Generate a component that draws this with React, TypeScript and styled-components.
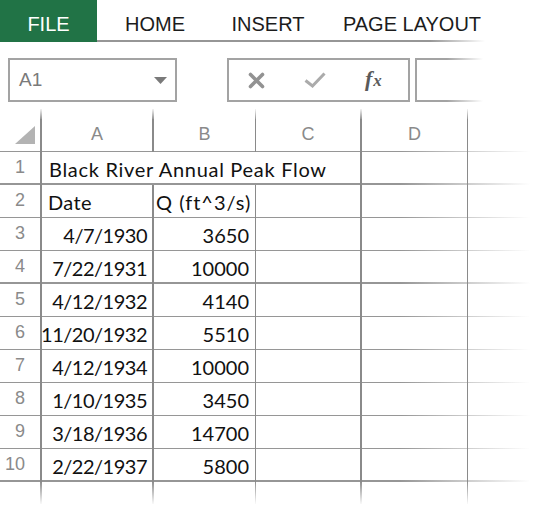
import React from 'react';
import styled, { createGlobalStyle } from 'styled-components';

const LINE = '#969696';
const LINE_DARK = '#8a8a8a';

const Global = createGlobalStyle`
  html, body { margin: 0; padding: 0; background: #fff; }
  body { font-family: "Liberation Sans", Arial, sans-serif; overflow: hidden; }
`;

const Page = styled.div`
  width: 534px;
  height: 505px;
  overflow: hidden;
  background: #fff;
`;

const TabBar = styled.div`
  display: flex;
  height: 42px;
  background: linear-gradient(to right, ${LINE} 0, ${LINE} 430px, rgba(150, 150, 150, 0) 485px) left bottom / 100% 2px no-repeat;
`;

const Tab = styled.div<{ $active?: boolean; $w: number }>`
  box-sizing: border-box;
  width: ${p => p.$w}px;
  height: 42px;
  padding-top: 12px;
  line-height: 24px;
  text-align: center;
  white-space: nowrap;
  font-size: 20px;
  color: ${p => (p.$active ? '#ffffff' : '#1c1c1c')};
  background: ${p => (p.$active ? '#217346' : 'transparent')};
`;

const FormulaBar = styled.div`
  display: flex;
  height: 44px;
  margin-top: 16px;
  padding-left: 8px;
`;

const NameBox = styled.div`
  box-sizing: border-box;
  width: 169px;
  border: 2px solid #a3a3a3;
  display: flex;
  align-items: center;
  justify-content: space-between;
  padding: 0 8px 0 9px;
  font-size: 19px;
  color: #7a7a7a;
`;

const ButtonBox = styled.div`
  box-sizing: border-box;
  width: 183px;
  margin-left: 50px;
  border: 2px solid #a3a3a3;
  display: flex;
  align-items: center;
  gap: 39px;
  padding-left: 19px;
`;

const Fx = styled.span`
  font-family: "Liberation Serif", "Times New Roman", serif;
  font-style: italic;
  font-weight: bold;
  color: #5a5a5a;
  font-size: 22px;
  line-height: 1;
  margin-top: -2px;
  & > span { font-size: 17px; margin-left: 1px; }
`;

const FormulaInput = styled.div`
  box-sizing: border-box;
  flex: 1;
  margin-left: 5px;
  border-left: 2px solid #a3a3a3;
  background:
    linear-gradient(to right, #a3a3a3 0, #a3a3a3 30px, rgba(163, 163, 163, 0) 66px) left top / 100% 2px no-repeat,
    linear-gradient(to right, #a3a3a3 0, #a3a3a3 30px, rgba(163, 163, 163, 0) 66px) left bottom / 100% 2px no-repeat;
`;

const Sheet = styled.div`
  margin-top: 7px;
`;

const COLS = '42px 112px 102px 106px 106px 1fr';

type Edge = 'thick' | 'thin' | 'none';
const edgeW = (e: Edge) => (e === 'thick' ? 2 : e === 'thin' ? 1 : 0);
const EDGES: Edge[] = ['thick', 'thick', 'thin', 'thick', 'thin', 'none'];

const StubRow = styled.div`
  display: grid;
  grid-template-columns: ${COLS};
  height: 10px;
`;

const Stub = styled.div<{ $edge: Edge; $up?: boolean }>`
  box-sizing: border-box;
  border-style: solid;
  border-width: 0 ${p => edgeW(p.$edge)}px 0 0;
  border-image: linear-gradient(${p => (p.$up ? 'to top' : 'to bottom')}, ${LINE_DARK}, rgba(138, 138, 138, 0)) 1;
`;

const TailRow = styled(StubRow)`
  height: 22px;
`;

const GridRow = styled.div<{ $line: number }>`
  display: grid;
  grid-template-columns: ${COLS};
  height: 33px;
  background: linear-gradient(to right, ${LINE} 0, ${LINE} 400px, rgba(150, 150, 150, 0) 530px) left bottom / 100% ${p => p.$line}px no-repeat;
`;

const Cell = styled.div<{ $edge: Edge; $align?: 'left' | 'right'; $span?: number; $pad?: string; $ls?: number }>`
  box-sizing: border-box;
  grid-column: span ${p => p.$span ?? 1};
  border-right: ${p => edgeW(p.$edge)}px solid ${LINE_DARK};
  display: flex;
  align-items: flex-end;
  justify-content: ${p => (p.$align === 'right' ? 'flex-end' : 'flex-start')};
  padding: ${p => p.$pad ?? '0 5px'};
  padding-bottom: 4px;
  white-space: nowrap;
  font-family: Lato, "Liberation Sans", sans-serif;
  font-size: 20px;
  line-height: 24px;
  letter-spacing: ${p => p.$ls ?? 0}px;
  color: #111;
`;

const RowHead = styled.div<{ $edge: Edge }>`
  box-sizing: border-box;
  border-right: ${p => edgeW(p.$edge)}px solid ${LINE_DARK};
  display: flex;
  align-items: center;
  justify-content: flex-end;
  padding: 0 15px 2px 0;
  font-size: 18px;
  color: #8a8a8a;
`;

const ColHead = styled.div<{ $edge: Edge }>`
  box-sizing: border-box;
  border-right: ${p => edgeW(p.$edge)}px solid ${LINE_DARK};
  display: flex;
  align-items: center;
  justify-content: center;
  padding-bottom: 2px;
  font-size: 18px;
  color: #8a8a8a;
`;

const Corner = styled.div`
  box-sizing: border-box;
  border-right: 2px solid ${LINE_DARK};
  display: flex;
  align-items: flex-end;
  justify-content: flex-end;
  padding: 0 5px 8px 0;
`;

type DataRow = { n: number; title?: string; a?: string; b?: string; line: number; head?: boolean };

const rows: DataRow[] = [
  { n: 1, title: 'Black River Annual Peak Flow', line: 2 },
  { n: 2, a: 'Date', b: 'Q (ft^3/s)', head: true, line: 1 },
  { n: 3, a: '4/7/1930', b: '3650', line: 1 },
  { n: 4, a: '7/22/1931', b: '10000', line: 2 },
  { n: 5, a: '4/12/1932', b: '4140', line: 1 },
  { n: 6, a: '11/20/1932', b: '5510', line: 1 },
  { n: 7, a: '4/12/1934', b: '10000', line: 1 },
  { n: 8, a: '1/10/1935', b: '3450', line: 1 },
  { n: 9, a: '3/18/1936', b: '14700', line: 1 },
  { n: 10, a: '2/22/1937', b: '5800', line: 2 },
];

const CancelIcon = () => (
  <svg width="17" height="17" viewBox="0 0 17 17">
    <path d="M2.5 2.5 L14.5 14.5 M14.5 2.5 L2.5 14.5" stroke="#929292" strokeWidth="3.6" strokeLinecap="round" fill="none" />
  </svg>
);

const EnterIcon = () => (
  <svg width="22" height="16" viewBox="0 0 22 16">
    <polyline points="1.5,8.5 8.5,14 20.5,1.5" stroke="#ababab" strokeWidth="3" strokeLinejoin="miter" fill="none" />
  </svg>
);

const DropArrow = () => (
  <svg width="13" height="7" viewBox="0 0 13 7">
    <polygon points="0,0 13,0 6.5,7" fill="#7a7a7a" />
  </svg>
);

const CornerTri = () => (
  <svg width="20" height="18" viewBox="0 0 20 18">
    <polygon points="0,18 20,18 20,0" fill="#b3b3b3" />
  </svg>
);

const letters = ['A', 'B', 'C', 'D', ''];

export default function App() {
  return (
    <Page>
      <Global />
      <TabBar>
        <Tab $active $w={97}>FILE</Tab>
        <Tab $w={116}>HOME</Tab>
        <Tab $w={110}>INSERT</Tab>
        <Tab $w={178}>PAGE LAYOUT</Tab>
      </TabBar>
      <FormulaBar>
        <NameBox>
          <span>A1</span>
          <DropArrow />
        </NameBox>
        <ButtonBox>
          <CancelIcon />
          <EnterIcon />
          <Fx>f<span>x</span></Fx>
        </ButtonBox>
        <FormulaInput />
      </FormulaBar>
      <Sheet>
        <StubRow>
          {EDGES.map((e, i) => (
            <Stub key={i} $edge={e} $up />
          ))}
        </StubRow>
        <GridRow $line={1}>
          <Corner>
            <CornerTri />
          </Corner>
          {letters.map((l, i) => (
            <ColHead key={i} $edge={EDGES[i + 1]}>{l}</ColHead>
          ))}
        </GridRow>
        {rows.map(r => (
          <GridRow key={r.n} $line={r.line}>
            <RowHead $edge="thick">{r.n}</RowHead>
            {r.title ? (
              <>
                <Cell $edge="thick" $span={3} $pad="0 5px 0 7px" $ls={0.7}>{r.title}</Cell>
                <Cell $edge="thin" />
                <Cell $edge="none" />
              </>
            ) : r.head ? (
              <>
                <Cell $edge="thick" $pad="0 5px 0 6px" $ls={0.4}>{r.a}</Cell>
                <Cell $edge="thin" $pad="0 5px 0 2px" $ls={1}>{r.b}</Cell>
                <Cell $edge="thick" />
                <Cell $edge="thin" />
                <Cell $edge="none" />
              </>
            ) : (
              <>
                <Cell $edge="thick" $align="right" $pad="0 5px 0 0" $ls={-0.5}>{r.a}</Cell>
                <Cell $edge="thin" $align="right" $pad="0 6px 0 0">{r.b}</Cell>
                <Cell $edge="thick" />
                <Cell $edge="thin" />
                <Cell $edge="none" />
              </>
            )}
          </GridRow>
        ))}
        <TailRow>
          {EDGES.map((e, i) => (
            <Stub key={i} $edge={e} />
          ))}
        </TailRow>
      </Sheet>
    </Page>
  );
}
